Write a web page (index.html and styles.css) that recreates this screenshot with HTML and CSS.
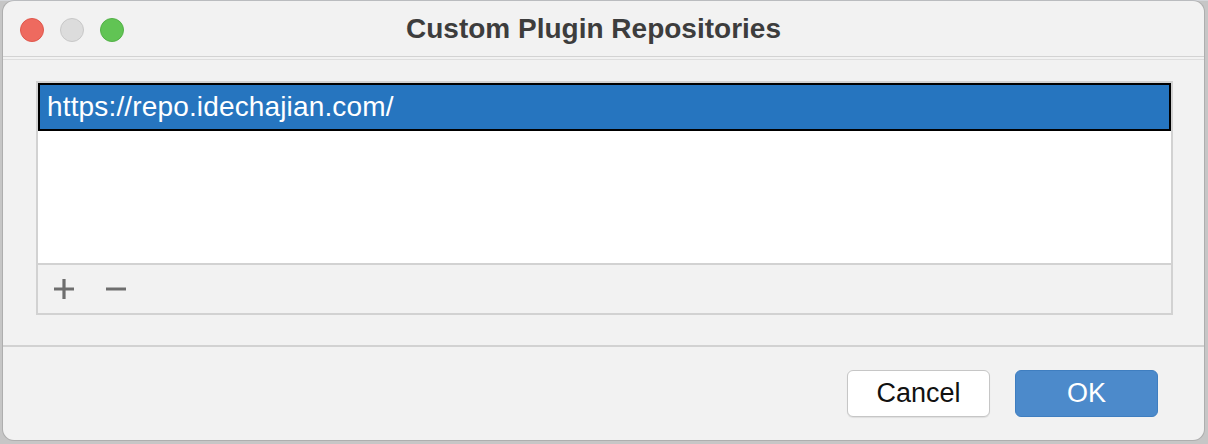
FILE: index.html
```html
<!DOCTYPE html>
<html>
<head>
<meta charset="utf-8">
<link rel="stylesheet" href="styles.css">
</head>
<body>
<div class="window">
  <div class="titlebar">
    <div class="lights">
      <span class="light red"></span>
      <span class="light grey"></span>
      <span class="light green"></span>
    </div>
    <div class="title">Custom Plugin Repositories</div>
  </div>
  <div class="content">
    <div class="panel">
      <div class="list">
        <div class="row selected">https://repo.idechajian.com/</div>
      </div>
      <div class="toolbar">
        <svg class="tool" width="20" height="20" viewBox="0 0 20 20"><path d="M10 0V20M0 10H20" stroke="#6e6e6e" stroke-width="3.2" fill="none"/></svg>
        <svg class="tool" width="20" height="20" viewBox="0 0 20 20"><path d="M0 10H20" stroke="#6e6e6e" stroke-width="3.2" fill="none"/></svg>
      </div>
    </div>
  </div>
  <div class="footer">
    <button class="btn cancel">Cancel</button>
    <button class="btn ok">OK</button>
  </div>
</div>
</body>
</html>
```

FILE: styles.css
```css
html, body {
  margin: 0;
  padding: 0;
}
body {
  width: 1208px;
  height: 444px;
  overflow: hidden;
  background: linear-gradient(to bottom, #d4d6da 0, #d4d6da 1px, #c6c6c6 1px);
  font-family: "Liberation Sans", Arial, sans-serif;
}
.window {
  margin: 1px 0 0 3px;
  width: 1201px;
  height: 439px;
  background: #f2f2f2;
  border-radius: 11px;
  box-shadow: 0 0 0 1px rgba(0,0,0,0.12);
  display: flex;
  flex-direction: column;
  overflow: hidden;
}
.titlebar {
  height: 55px;
  flex: none;
  display: flex;
  align-items: center;
  position: relative;
  border-bottom: 1px solid #d3d3d3;
}
.lights {
  display: flex;
  gap: 16px;
  padding-left: 17px;
  padding-top: 2px;
}
.light {
  width: 24px;
  height: 24px;
  border-radius: 50%;
  box-sizing: border-box;
}
.red { background: #ee6a5f; border: 1px solid #e0574c; }
.grey { background: #dcdcdc; border: 1px solid #c8c8c8; }
.green { background: #61c454; border: 1px solid #53b147; }
.title {
  position: absolute;
  left: 0;
  right: 0;
  top: 12px;
  text-align: center;
  font-size: 28px;
  font-weight: bold;
  color: #3d3d3d;
  padding-right: 20px;
}
.content {
  flex: none;
  border-top: 1px solid #dedede;
  margin-top: 2px;
  padding: 21px 31px 0 33px;
  height: 288px;
  box-sizing: border-box;
  border-bottom: 2px solid #d2d2d2;
}
.panel {
  border: 2px solid #d2d2d2;
  display: flex;
  flex-direction: column;
}
.list {
  height: 180px;
  background: #fff;
  border-bottom: 2px solid #d2d2d2;
}
.row {
  height: 48px;
  box-sizing: border-box;
  padding-left: 7px;
  display: flex;
  align-items: center;
  font-size: 28px;
  letter-spacing: 0.15px;
}
.selected {
  background: #2675bf;
  border: 2px solid #000;
  color: #fff;
}
.toolbar {
  height: 48px;
  display: flex;
  align-items: center;
  gap: 32px;
  padding-left: 16px;
}
.footer {
  flex: 1;
  display: flex;
  justify-content: flex-end;
  align-items: flex-start;
  gap: 25px;
  padding: 23px 46px 0 0;
}
.btn {
  width: 143px;
  height: 47px;
  border-radius: 6px;
  font-family: "Liberation Sans", Arial, sans-serif;
  font-size: 27px;
  padding: 0;
  box-sizing: border-box;
}
.cancel {
  background: #fff;
  border: 1px solid #c6c6c6;
  color: #111;
  box-shadow: 0 1px 1px rgba(0,0,0,0.08);
}
.ok {
  background: #4c8acb;
  border: 1px solid #3f7ec0;
  color: #fff;
}
```
